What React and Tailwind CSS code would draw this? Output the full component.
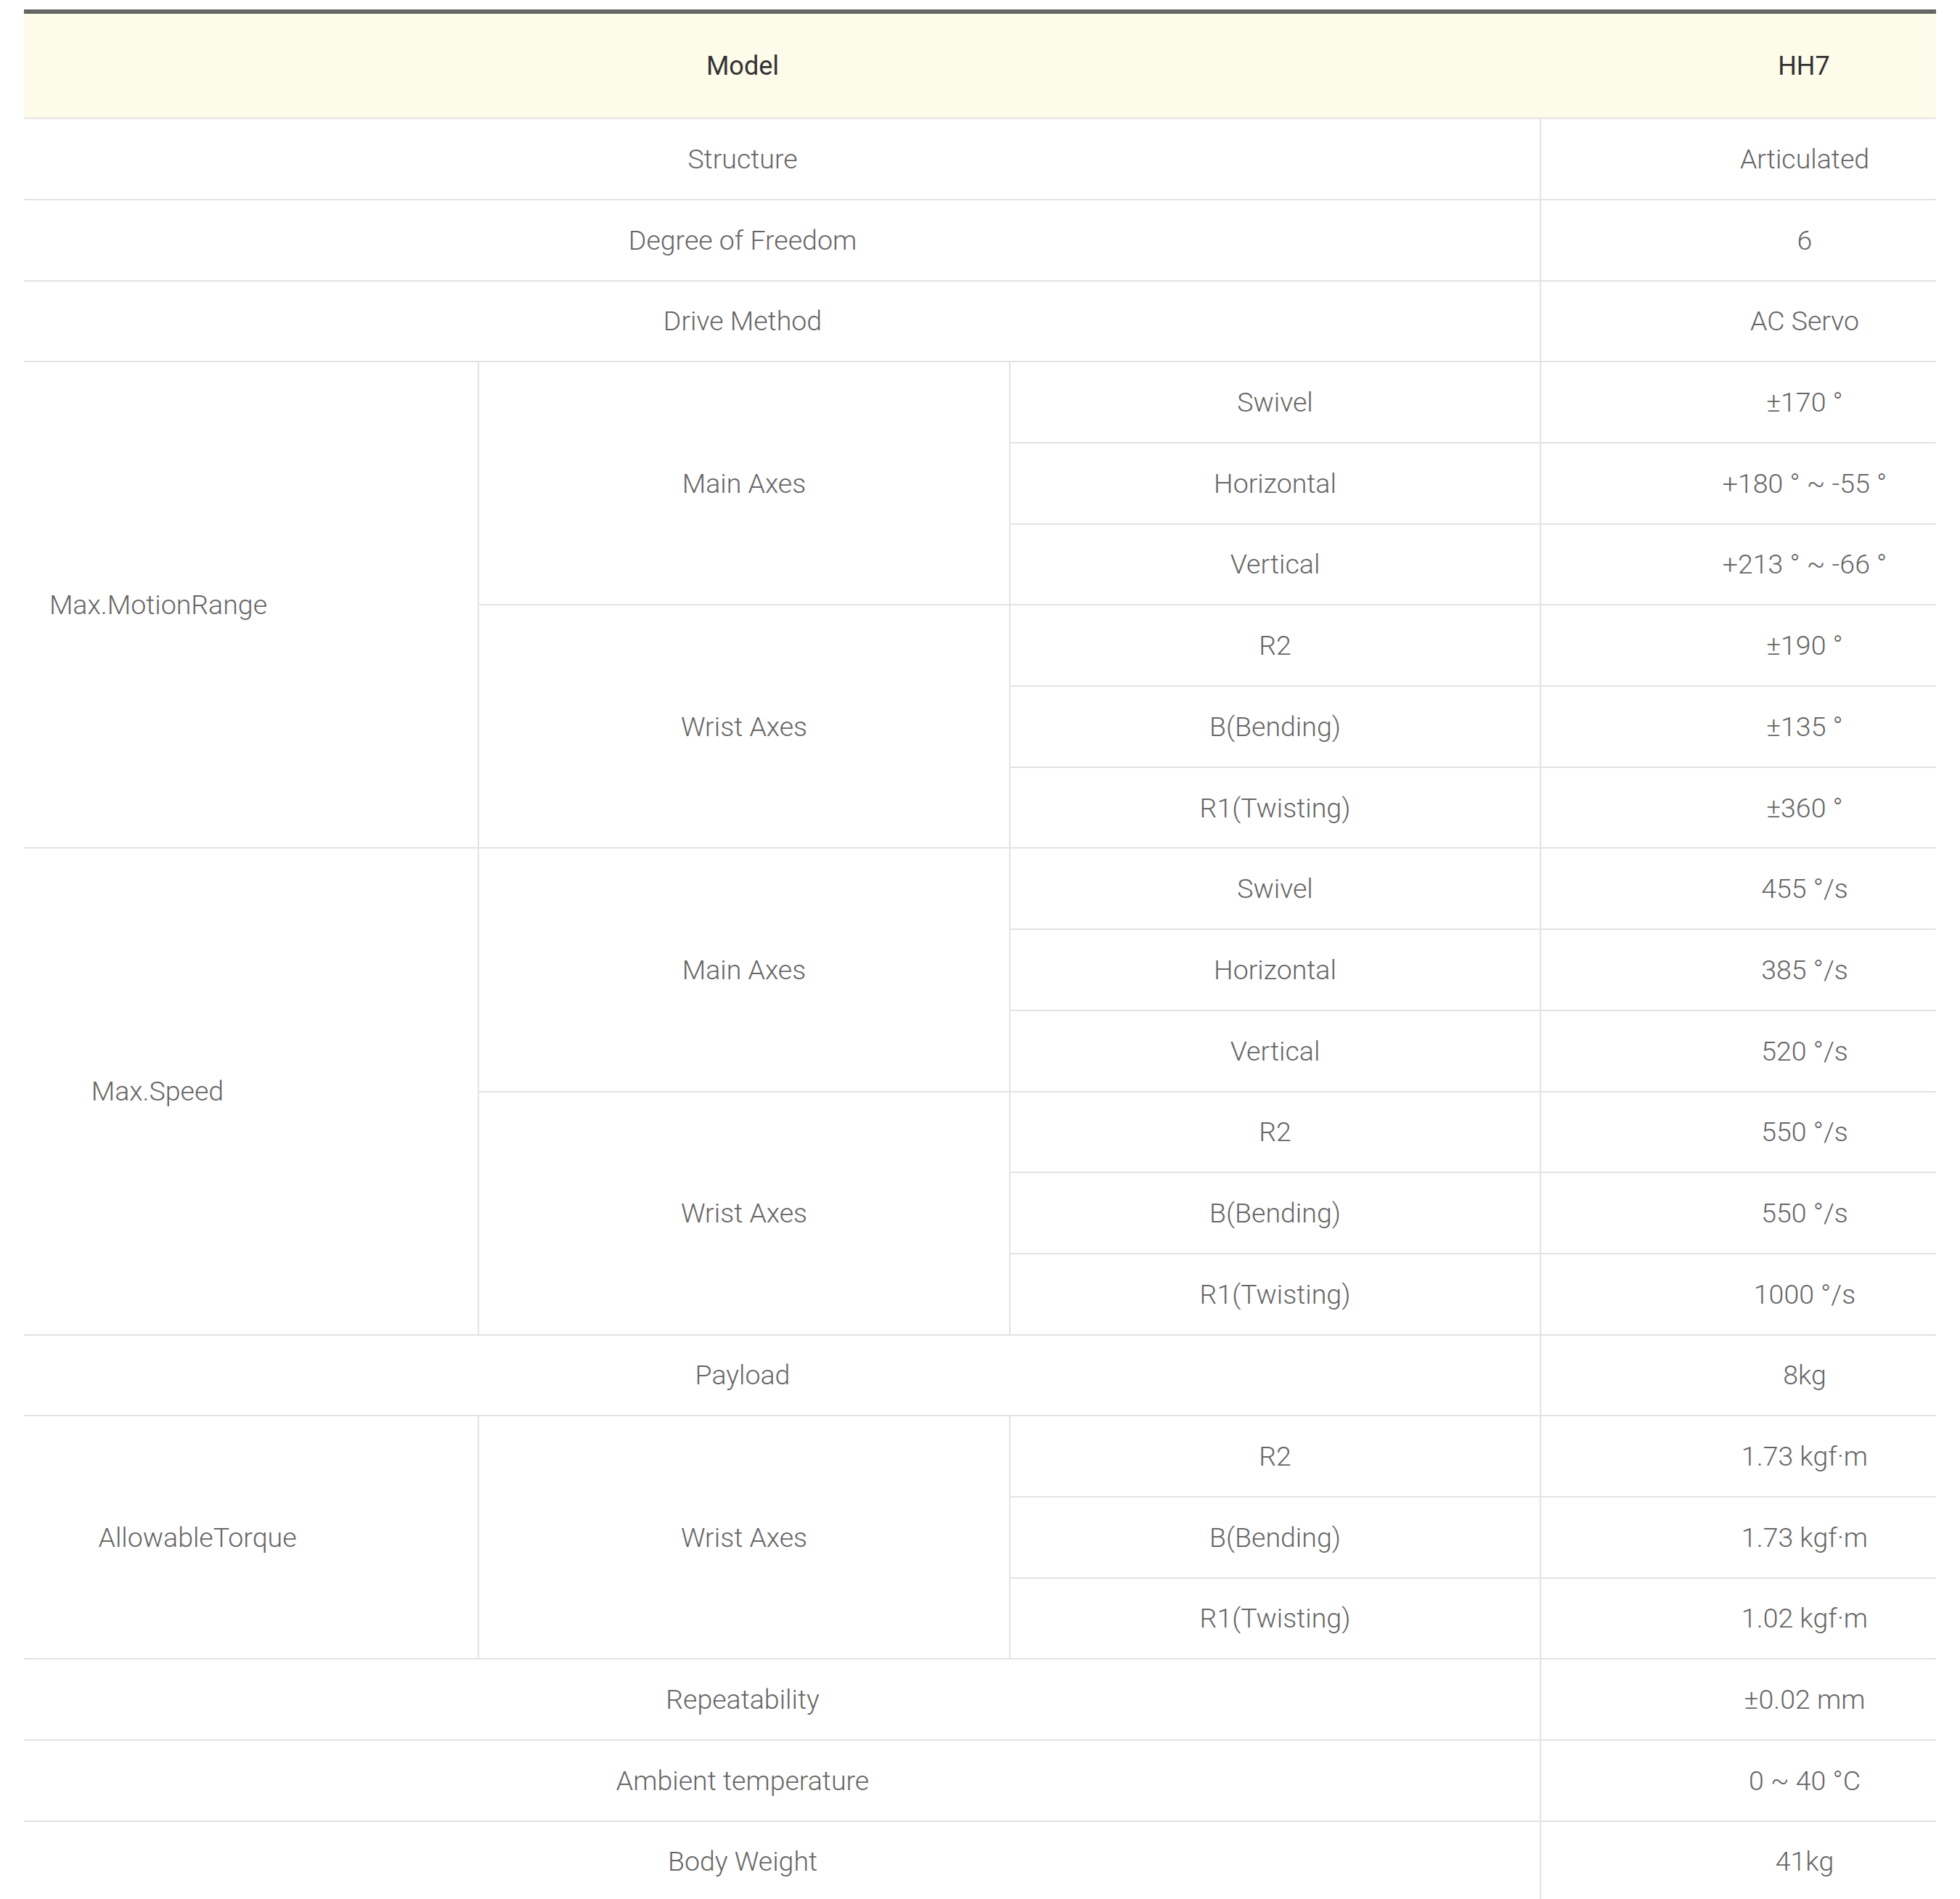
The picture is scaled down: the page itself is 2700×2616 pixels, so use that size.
import React from "react";

const B = "border-b-2 border-[#e3e3e3]";
const L = "border-l-2 border-l-[#e3e3e3]";
const cell = "flex items-center justify-center " + B;

function Span({ children }) {
  return <div className={`${cell} col-span-3 pr-[108px]`}>{children}</div>;
}
function Val({ children }) {
  return <div className={`${cell} ${L} pl-[182px]`}>{children}</div>;
}
function Sub({ children }) {
  return <div className={`${cell} ${L}`}>{children}</div>;
}
function Group({ children, span = "row-span-3" }) {
  return <div className={`${cell} ${L} ${span}`}>{children}</div>;
}

export default function App() {
  return (
    <div className="bg-white w-[2700px] min-h-[2616px] pt-[13px] font-[family-name:Roboto,sans-serif]">
      <div className="ml-[33px] w-[2634px]">
        <div className="flex h-[151.3px] border-t-[6px] border-t-[#666666] border-b-2 border-b-[#e3e3e3] bg-[#fdfbea] text-[36px] text-[#333333]">
          <div className="w-[2088px] flex items-center justify-center pr-[108px]">Model</div>
          <div className="flex-1 flex items-center justify-center pl-[182px]">HH7</div>
        </div>
        <div className="grid grid-cols-[625px_732px_731px_546px] auto-rows-[111.7px] text-[37.5px] font-light text-[#666666]">
          <Span>Structure</Span>
          <Val>Articulated</Val>
          <Span>Degree of Freedom</Span>
          <Val>6</Val>
          <Span>Drive Method</Span>
          <Val>AC Servo</Val>

          <div className={`${cell} row-span-6 pr-[255px]`}>Max.MotionRange</div>
          <Group>Main Axes</Group>
          <Sub>Swivel</Sub>
          <Val>±170 °</Val>
          <Sub>Horizontal</Sub>
          <Val>+180 ° ~ -55 °</Val>
          <Sub>Vertical</Sub>
          <Val>+213 ° ~ -66 °</Val>
          <Group>Wrist Axes</Group>
          <Sub>R2</Sub>
          <Val>±190 °</Val>
          <Sub>B(Bending)</Sub>
          <Val>±135 °</Val>
          <Sub>R1(Twisting)</Sub>
          <Val>±360 °</Val>

          <div className={`${cell} row-span-6 pr-[257px]`}>Max.Speed</div>
          <Group>Main Axes</Group>
          <Sub>Swivel</Sub>
          <Val>455 °/s</Val>
          <Sub>Horizontal</Sub>
          <Val>385 °/s</Val>
          <Sub>Vertical</Sub>
          <Val>520 °/s</Val>
          <Group>Wrist Axes</Group>
          <Sub>R2</Sub>
          <Val>550 °/s</Val>
          <Sub>B(Bending)</Sub>
          <Val>550 °/s</Val>
          <Sub>R1(Twisting)</Sub>
          <Val>1000 °/s</Val>

          <Span>Payload</Span>
          <Val>8kg</Val>

          <div className={`${cell} row-span-3 pr-[147px]`}>AllowableTorque</div>
          <Group>Wrist Axes</Group>
          <Sub>R2</Sub>
          <Val>1.73 kgf·m</Val>
          <Sub>B(Bending)</Sub>
          <Val>1.73 kgf·m</Val>
          <Sub>R1(Twisting)</Sub>
          <Val>1.02 kgf·m</Val>

          <Span>Repeatability</Span>
          <Val>±0.02 mm</Val>
          <Span>Ambient temperature</Span>
          <Val>0 ~ 40 °C</Val>
          <Span>Body Weight</Span>
          <Val>41kg</Val>
        </div>
      </div>
    </div>
  );
}
